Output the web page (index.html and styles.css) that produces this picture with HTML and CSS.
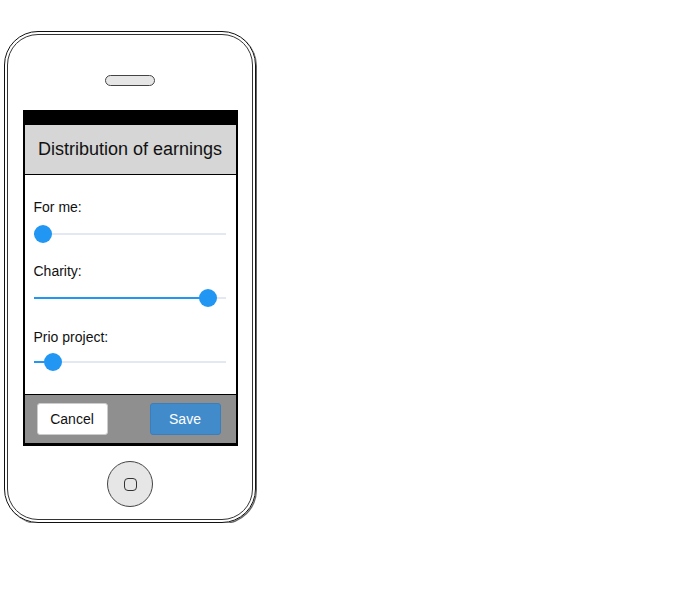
FILE: index.html
```html
<!DOCTYPE html>
<html lang="en">
<head>
    <meta charset="UTF-8">
    <meta name="viewport" content="width=device-width, initial-scale=1.0">
    <title>Distribution of earnings</title>
    <link rel="stylesheet" href="styles.css">
</head>
<body>
    <div class="phone">
        <div class="phone-body">
            <div class="speaker"></div>

            <div class="screen">
                <div class="status-bar"></div>
                <h1 class="title">Distribution of earnings</h1>

                <div class="content">
                    <div class="field">
                        <label>For me:</label>
                        <div class="slider" style="--v: 0">
                            <div class="track"><div class="fill"></div></div>
                            <div class="thumb"></div>
                        </div>
                    </div>
                    <div class="field">
                        <label>Charity:</label>
                        <div class="slider" style="--v: 0.95">
                            <div class="track"><div class="fill"></div></div>
                            <div class="thumb"></div>
                        </div>
                    </div>
                    <div class="field">
                        <label>Prio project:</label>
                        <div class="slider" style="--v: 0.06">
                            <div class="track"><div class="fill"></div></div>
                            <div class="thumb"></div>
                        </div>
                    </div>
                </div>

                <div class="footer">
                    <button class="btn btn-cancel">Cancel</button>
                    <button class="btn btn-save">Save</button>
                </div>
            </div>

            <div class="home-button"><span class="home-square"></span></div>
        </div>
    </div>
</body>
</html>
```

FILE: styles.css
```css
body {
    font-family: "Liberation Sans", Arial, sans-serif;
    margin: 0;
    background-color: #fff;
}

/* Корпус телефону */
.phone {
    width: 252px;
    height: 492px;
    box-sizing: border-box;
    margin: 31px 0 0 4px;
    padding: 2px;
    border: 1px solid #111;
    border-radius: 34px;
    box-shadow: 1px 1px 0 #666;
}
.phone-body {
    height: 100%;
    box-sizing: border-box;
    border: 1.5px solid #333;
    border-radius: 31px;
    display: flex;
    flex-direction: column;
    align-items: center;
    padding-top: 40px;
}
.speaker {
    width: 50px;
    height: 11px;
    box-sizing: border-box;
    border: 1px solid #444;
    border-radius: 6px;
    background-color: #e6e6e6;
}

/* Екран */
.screen {
    width: 215px;
    margin-top: 24px;
    border: 2px solid #000;
    box-sizing: border-box;
    background-color: #fff;
}
.status-bar {
    height: 13px;
    background-color: #000;
}
.title {
    margin: 0;
    height: 49px;
    line-height: 48px;
    font-size: 18px;
    font-weight: normal;
    text-align: center;
    color: #111;
    background-color: #d6d6d6;
    border-bottom: 1px solid #000;
}
.content {
    height: 219px;
    box-sizing: border-box;
    padding: 24px 10px 0 9px;
}
.field {
    height: 64px;
}
.field label {
    display: block;
    font-size: 14px;
    line-height: 16px;
    color: #111;
    margin-bottom: 10px;
}
.field:last-child label {
    margin-top: 2px;
    margin-bottom: 8px;
}

/* Повзунки */
.slider {
    position: relative;
    height: 18px;
}
.track {
    position: relative;
    top: 8px;
    height: 2px;
    background-color: #e4e8f2;
}
.fill {
    height: 100%;
    width: calc(9px + var(--v) * (100% - 18px));
    background-color: #2196f3;
}
.thumb {
    position: absolute;
    top: 0;
    left: calc(var(--v) * (100% - 18px));
    width: 18px;
    height: 18px;
    border-radius: 50%;
    background-color: #2196f3;
}

/* Нижня панель */
.footer {
    height: 50px;
    box-sizing: border-box;
    border-top: 1px solid #000;
    border-bottom: 1px solid #000;
    background-color: #8f8f8f;
    display: flex;
    align-items: center;
    justify-content: space-between;
    padding: 0 15px 0 12px;
}
.btn {
    width: 71px;
    height: 32px;
    font-family: inherit;
    font-size: 14px;
    border-radius: 3px;
    cursor: pointer;
}
.btn-cancel {
    background-color: #fff;
    border: 1px solid #ccc;
    color: #111;
}
.btn-save {
    background-color: #428bca;
    border: 1px solid #3a7ebb;
    color: #fff;
}

/* Кнопка додому */
.home-button {
    width: 46px;
    height: 46px;
    box-sizing: border-box;
    margin-top: 15px;
    border: 1px solid #444;
    border-radius: 50%;
    background-color: #e6e6e6;
    display: flex;
    align-items: center;
    justify-content: center;
}
.home-square {
    width: 13px;
    height: 13px;
    box-sizing: border-box;
    border: 1px solid #333;
    border-radius: 4px;
}
```
